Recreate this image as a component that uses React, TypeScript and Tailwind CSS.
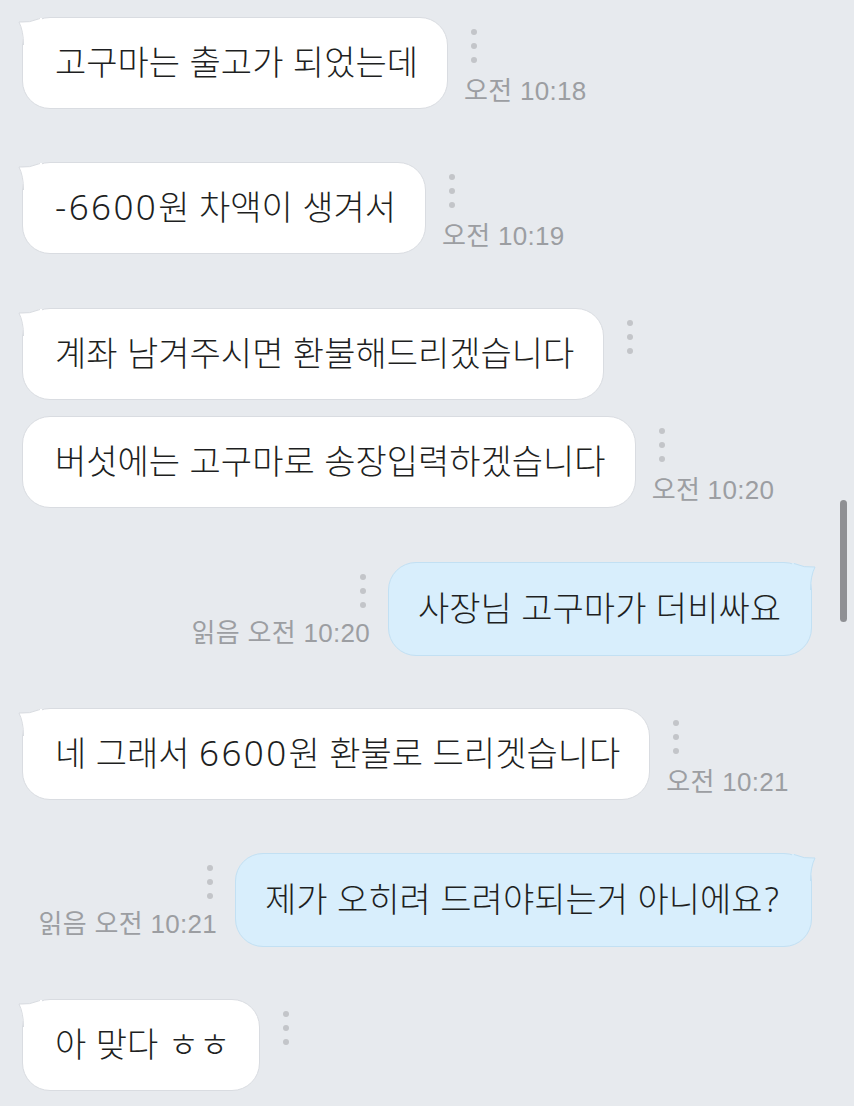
import React from "react";

const FONT = { fontFamily: '"Liberation Sans", "Noto Sans CJK KR", "Noto Sans", sans-serif' };
const NUMFONT = { fontFamily: '"Noto Sans", "Liberation Sans", sans-serif' };

function Rich({ text }: { text: string }) {
  const parts = text.split(/([-0-9]+|\?)/);
  return (
    <>
      {parts.map((p, i) =>
        /^[-0-9]+$/.test(p) ? (
          <span key={i} className="text-[35px] leading-none tracking-[2.4px] font-light" style={NUMFONT}>
            {p}
          </span>
        ) : p === "?" ? (
          <span key={i} className="leading-none font-light pl-[2px] pr-[2px]" style={NUMFONT}>
            {p}
          </span>
        ) : (
          <React.Fragment key={i}>{p}</React.Fragment>
        )
      )}
    </>
  );
}

function Dots() {
  return (
    <div className="flex flex-col items-center gap-[8px]">
      <span className="block w-[6px] h-[6px] rounded-full bg-[#c3c5c9]" />
      <span className="block w-[6px] h-[6px] rounded-full bg-[#c3c5c9]" />
      <span className="block w-[6px] h-[6px] rounded-full bg-[#c3c5c9]" />
    </div>
  );
}

function LeftTail() {
  return (
    <svg className="absolute left-[-5px] top-[-1px]" width="24" height="30" viewBox="0 0 24 30">
      <path d="M1 5 Q12 6 22 1 L24 1 L24 30 L5 30 L5 28 Q5 14 1 5 Z" fill="#ffffff" />
      <path d="M5.5 28 Q5.5 14 1 5 Q12 6 22 1.5" fill="none" stroke="#d9dce1" strokeWidth="1" />
    </svg>
  );
}

function RightTail() {
  return (
    <svg className="absolute right-[-5px] top-[-1px]" width="24" height="30" viewBox="0 0 24 30">
      <path d="M23 5 Q12 6 2 1 L0 1 L0 30 L19 30 L19 28 Q19 14 23 5 Z" fill="#d8eefc" />
      <path d="M18.5 28 Q18.5 14 23 5 Q12 6 2 1.5" fill="none" stroke="#c2e0f3" strokeWidth="1" />
    </svg>
  );
}

function Left({ text, time, tail = true, mt }: { text: string; time?: string; tail?: boolean; mt: string }) {
  return (
    <div className={`flex items-stretch ${mt}`}>
      <div className="relative bg-white border border-[#d9dce1] rounded-[28px] pl-[32px] pr-[29px] py-[25px]">
        {tail && <LeftTail />}
        <span className="block h-[40px] text-[34px] leading-[40px] font-light text-[#1e1f22] whitespace-nowrap">
          <Rich text={text} />
        </span>
      </div>
      <div className="flex flex-col justify-between pt-[12px] pb-[4px]">
        <div className="pl-[23px] w-fit">
          <Dots />
        </div>
        {time && (
          <span className="pl-[16px] text-[26px] leading-[28px] tracking-[0.3px] text-[#9c9ea2] whitespace-nowrap">
            {time}
          </span>
        )}
      </div>
    </div>
  );
}

function Right({ text, time, mt }: { text: string; time: string; mt: string }) {
  return (
    <div className={`flex items-stretch justify-end pr-[42px] ${mt}`}>
      <div className="flex flex-col justify-between items-end pt-[12px] pb-[9px]">
        <div className="pr-[22px]">
          <Dots />
        </div>
        <span className="pr-[18px] text-[26px] leading-[28px] tracking-[0.3px] text-[#9c9ea2] whitespace-nowrap">
          {time}
        </span>
      </div>
      <div className="relative bg-[#d8eefc] border border-[#c2e0f3] rounded-[28px] pl-[29px] pr-[30px] py-[26px]">
        <RightTail />
        <span className="block h-[40px] text-[34px] leading-[40px] font-light text-[#1e1f22] whitespace-nowrap">
          <Rich text={text} />
        </span>
      </div>
    </div>
  );
}

export default function App() {
  return (
    <div className="relative w-[854px] h-[1106px] overflow-hidden bg-[#e7eaee]" style={FONT}>
      <div className="flex flex-col pl-[22px] pt-[17px]">
        <Left text="고구마는 출고가 되었는데" time="오전 10:18" mt="mt-0" />
        <Left text="-6600원 차액이 생겨서" time="오전 10:19" mt="mt-[53px]" />
        <Left text="계좌 남겨주시면 환불해드리겠습니다" mt="mt-[54px]" />
        <Left text="버섯에는 고구마로 송장입력하겠습니다" time="오전 10:20" tail={false} mt="mt-[16px]" />
        <Right text="사장님 고구마가 더비싸요" time="읽음 오전 10:20" mt="mt-[54px]" />
        <Left text="네 그래서 6600원 환불로 드리겟습니다" time="오전 10:21" mt="mt-[52px]" />
        <Right text="제가 오히려 드려야되는거 아니에요?" time="읽음 오전 10:21" mt="mt-[53px]" />
        <Left text="아 맞다 ㅎㅎ" mt="mt-[52px]" />
      </div>
      <div className="absolute left-[840px] top-[500px] w-[7px] h-[122px] rounded-full bg-[#8f9094]" />
    </div>
  );
}
